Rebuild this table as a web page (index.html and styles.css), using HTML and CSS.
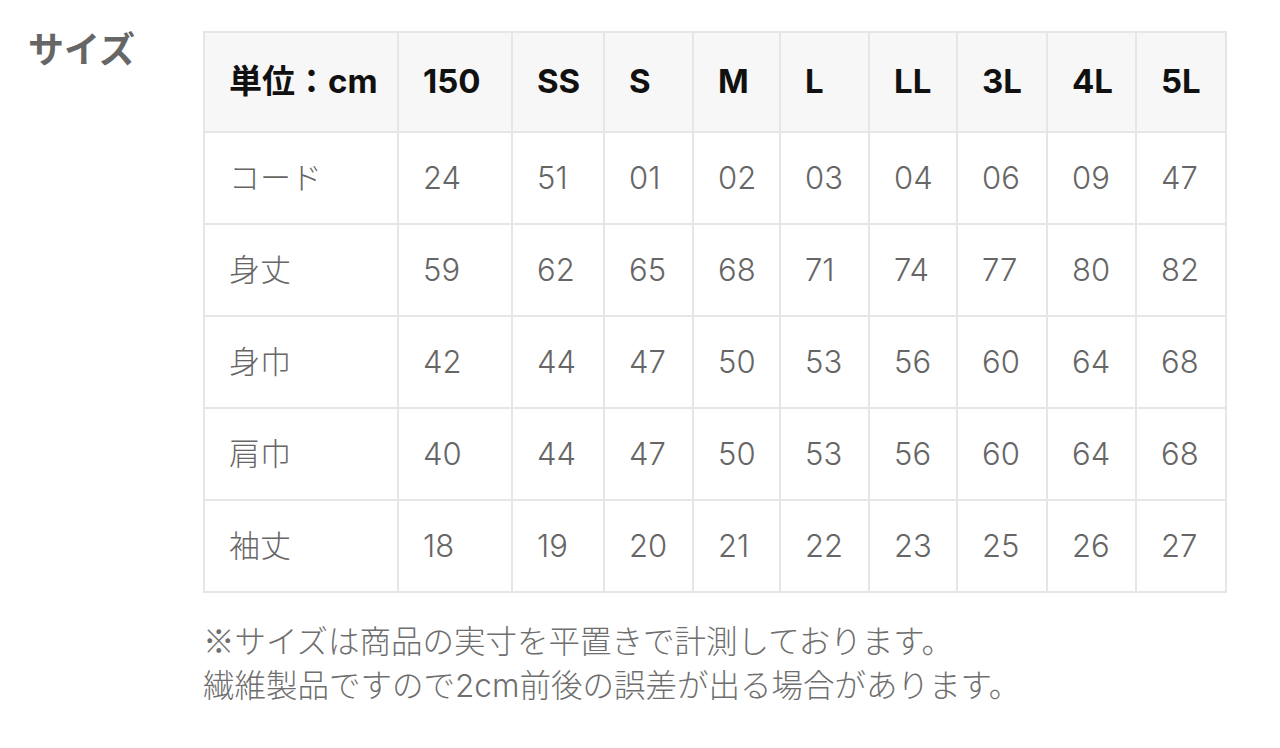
FILE: index.html
```html
<!DOCTYPE html>
<html lang="ja">
<head>
<meta charset="utf-8">
<title>サイズ</title>
<link rel="stylesheet" href="styles.css">
</head>
<body>
<div class="page">
  <h2 class="title">サイズ</h2>
  <div class="content">
    <table class="size-table">
      <colgroup>
        <col class="c-label">
        <col class="c-150">
        <col class="c-ss">
        <col class="c-s">
        <col class="c-m">
        <col class="c-l">
        <col class="c-ll">
        <col class="c-3l">
        <col class="c-4l">
        <col class="c-5l">
      </colgroup>
      <thead>
        <tr><th>単位：cm</th><th>150</th><th>SS</th><th>S</th><th>M</th><th>L</th><th>LL</th><th>3L</th><th>4L</th><th>5L</th></tr>
      </thead>
      <tbody>
        <tr><td>コード</td><td>24</td><td>51</td><td>01</td><td>02</td><td>03</td><td>04</td><td>06</td><td>09</td><td>47</td></tr>
        <tr><td>身丈</td><td>59</td><td>62</td><td>65</td><td>68</td><td>71</td><td>74</td><td>77</td><td>80</td><td>82</td></tr>
        <tr><td>身巾</td><td>42</td><td>44</td><td>47</td><td>50</td><td>53</td><td>56</td><td>60</td><td>64</td><td>68</td></tr>
        <tr><td>肩巾</td><td>40</td><td>44</td><td>47</td><td>50</td><td>53</td><td>56</td><td>60</td><td>64</td><td>68</td></tr>
        <tr><td>袖丈</td><td>18</td><td>19</td><td>20</td><td>21</td><td>22</td><td>23</td><td>25</td><td>26</td><td>27</td></tr>
      </tbody>
    </table>
    <p class="note"><span class="mark">※</span>サイズは商品の実寸を平置きで計測しております。<br>繊維製品ですので2cm前後の誤差が出る場合があります。</p>
  </div>
</div>
</body>
</html>
```
FILE: styles.css
```css
html, body {
  margin: 0;
  padding: 0;
  background: #ffffff;
}
body {
  font-family: Inter, "Noto Sans CJK JP", sans-serif;
}
.page {
  display: flex;
  align-items: flex-start;
  padding: 31px 0 0 28px;
}
.title {
  width: 175px;
  flex: none;
  margin: -2px 0 0 0;
  font-size: 36px;
  line-height: 1;
  font-weight: 700;
  color: #666666;
  font-family: "Noto Sans CJK JP", sans-serif;
}
.content {
  display: flex;
  flex-direction: column;
}
.size-table {
  border-collapse: collapse;
  table-layout: fixed;
  width: 1023px;
}
.c-label { width: 194px; }
.c-150 { width: 114px; }
.c-ss { width: 92px; }
.c-s { width: 89px; }
.c-m { width: 87px; }
.c-l { width: 89px; }
.c-ll { width: 88px; }
.c-3l { width: 90px; }
.c-4l { width: 89px; }
.c-5l { width: 90px; }
.size-table th,
.size-table td {
  border: 2px solid #e6e6e6;
  text-align: left;
  padding: 0 0 0 24px;
  white-space: nowrap;
  overflow: hidden;
  line-height: 1.2;
}
.size-table th {
  height: 98px;
  background: #f7f7f7;
  color: #111111;
  font-size: 33px;
  font-weight: 700;
}
.size-table td {
  height: 90px;
  color: #666666;
  font-size: 31px;
  font-weight: 300;
}
.note {
  margin: 24px 0 0 0;
  font-size: 31.5px;
  line-height: 44px;
  font-weight: 300;
  color: #6e6e6e;
}
.mark {
  font-family: "Noto Sans CJK JP", sans-serif;
}
```
